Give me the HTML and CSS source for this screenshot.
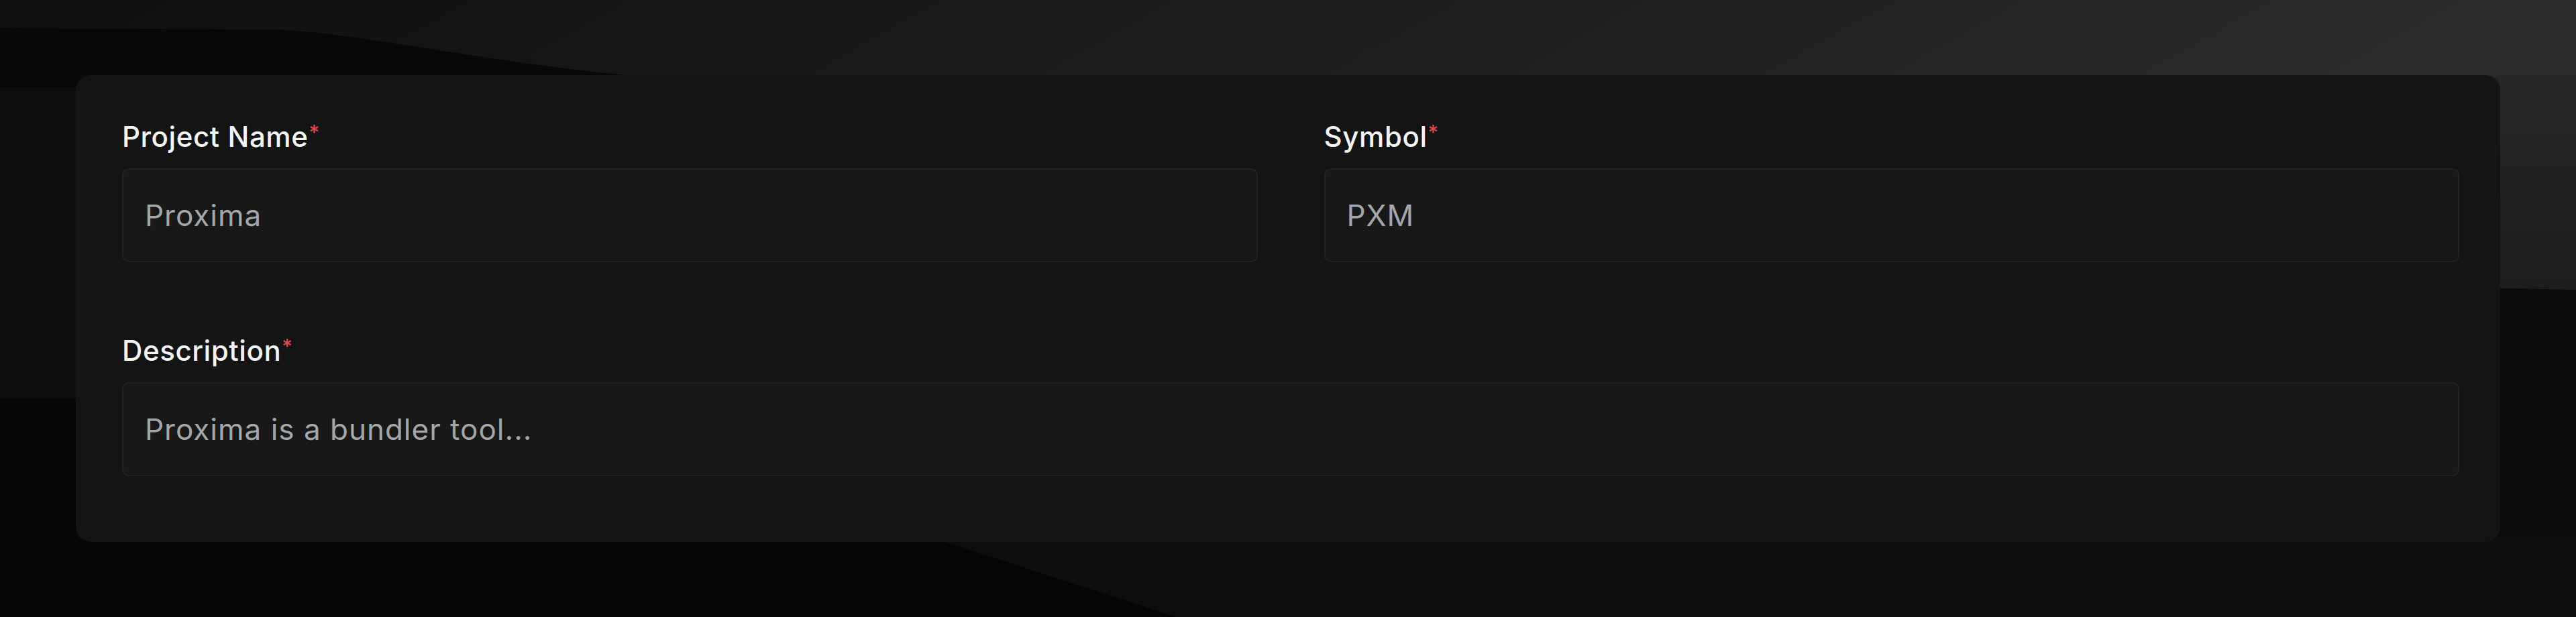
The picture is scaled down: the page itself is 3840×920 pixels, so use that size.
FILE: index.html
```html
<!DOCTYPE html>
<html lang="en">
<head>
<meta charset="utf-8">
<title>Project form</title>
<link rel="stylesheet" href="styles.css">
</head>
<body>
<svg class="bg" viewBox="0 0 3840 920" preserveAspectRatio="none" aria-hidden="true">
  <defs>
    <linearGradient id="topGrad" x1="0" y1="0" x2="1" y2="0.2">
      <stop offset="0" stop-color="#0f0f11"/>
      <stop offset="0.15" stop-color="#131314"/>
      <stop offset="0.5" stop-color="#1c1c1d"/>
      <stop offset="1" stop-color="#2c2c2c"/>
    </linearGradient>
    <linearGradient id="rightGrad" x1="0" y1="0" x2="0" y2="1">
      <stop offset="0" stop-color="#272727"/>
      <stop offset="1" stop-color="#1d1d1d"/>
    </linearGradient>
  </defs>
  <rect x="0" y="0" width="3840" height="920" fill="#0d0d10"/>
  <path d="M0 0 H3840 V432 L3700 430 V112 H930 C720 92 520 46 400 44 L0 42 Z" fill="url(#topGrad)"/>
  <path d="M3700 112 H3840 V432 L3700 430 Z" fill="url(#rightGrad)"/>
  <path d="M0 42 L400 44 C520 46 720 92 930 112 V130 H0 Z" fill="#080808"/>
  <path d="M3727 430 L3840 432 V800 H3727 Z" fill="#0a0a0b"/>
  <path d="M0 594 H200 V808 H1409 L1752 920 H0 Z" fill="#050505"/>
</svg>
<main class="page">
  <form class="card">
    <div class="row two">
      <div class="field">
        <label class="label">Project Name<span class="req">*</span></label>
        <div class="input">Proxima</div>
      </div>
      <div class="field">
        <label class="label">Symbol<span class="req">*</span></label>
        <div class="input">PXM</div>
      </div>
    </div>
    <div class="row">
      <div class="field">
        <label class="label">Description<span class="req">*</span></label>
        <div class="input">Proxima is a bundler tool...</div>
      </div>
    </div>
  </form>
</main>
</body>
</html>
```

FILE: styles.css
```css
html, body {
  margin: 0;
  padding: 0;
  width: 3840px;
  height: 920px;
  overflow: hidden;
  background: #0d0d10;
  font-family: Inter, "Noto Sans", "Liberation Sans", sans-serif;
}

body {
  position: relative;
}

.bg {
  position: absolute;
  left: 0;
  top: 0;
  width: 3840px;
  height: 920px;
  z-index: 0;
}

.page {
  position: relative;
  z-index: 1;
  padding: 112px 113px 0 113px;
}

.card {
  box-sizing: border-box;
  height: 696px;
  background: #141414;
  border-radius: 22px;
  padding: 68px 61px 0 69px;
  display: flex;
  flex-direction: column;
  gap: 108px;
}

.row {
  display: grid;
  grid-template-columns: 1fr;
}

.row.two {
  grid-template-columns: 1fr 1fr;
  column-gap: 99px;
}

.field {
  display: flex;
  flex-direction: column;
  gap: 23px;
}

.label {
  font-size: 42px;
  line-height: 48px;
  font-weight: 500;
  color: #f4f4f4;
  letter-spacing: 0.6px;
}

.req {
  color: #e0474c;
  font-size: 30px;
  vertical-align: top;
  line-height: 30px;
  position: relative;
  top: 2px;
  margin-left: 1px;
}

.input {
  box-sizing: border-box;
  height: 140px;
  background: #181818;
  border: 2px solid #222222;
  border-radius: 10px;
  padding: 0 32px;
  display: flex;
  align-items: center;
  font-size: 44px;
  color: #a3a7ab;
  letter-spacing: 1px;
}
```
